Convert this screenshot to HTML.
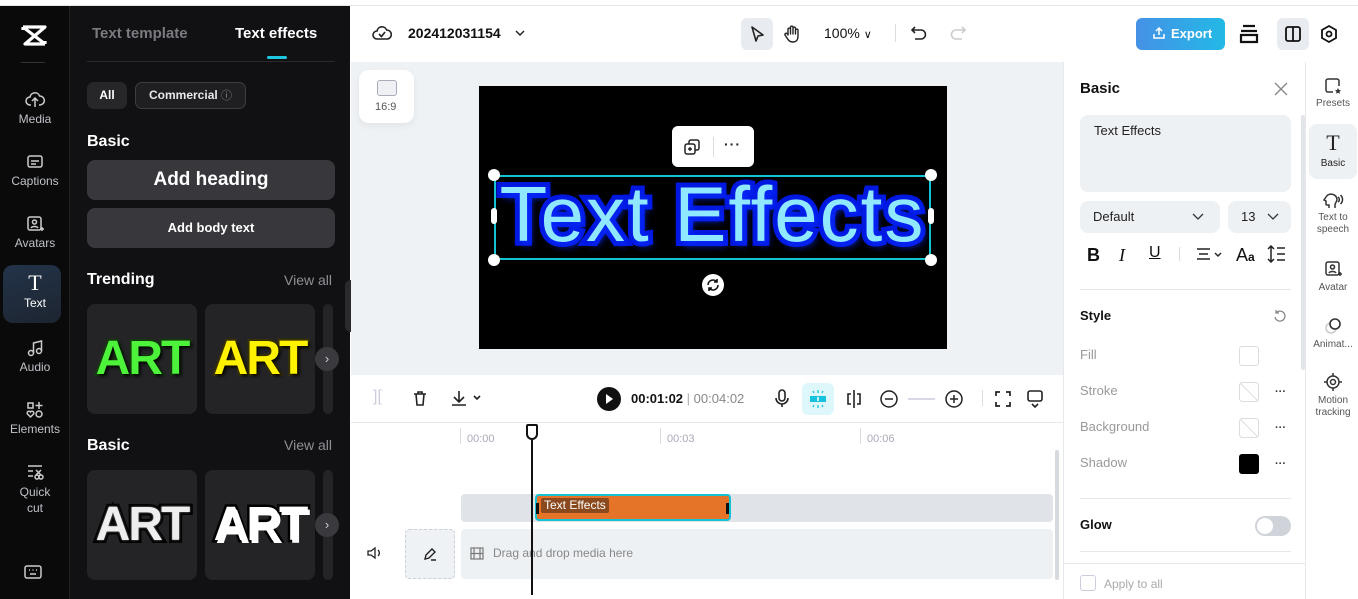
<!DOCTYPE html>
<html><head><meta charset="utf-8"><style>
*{box-sizing:border-box;margin:0;padding:0}
body{width:1358px;height:599px;overflow:hidden;font-family:"Liberation Sans",sans-serif;background:#fff;position:relative}
.a{position:absolute}
.rail{left:0;top:6px;width:70px;height:593px;background:#0a0a0a;border-right:1px solid #222}
.ri{position:absolute;left:0;width:70px;text-align:center;color:#bfc2c8;font-size:12px}
.ri svg{display:block;margin:0 auto 2px}
.panel{left:70px;top:6px;width:280px;height:593px;background:#111113}
.w{color:#fff;font-weight:bold}
.btn{position:absolute;background:#37373c;border-radius:8px;color:#fff;font-weight:bold;text-align:center}
.card{position:absolute;width:110px;height:110px;background:#242427;border-radius:8px;overflow:hidden}
.art{position:absolute;left:0;top:30px;width:110px;text-align:center;font-weight:bold;font-size:48px;line-height:50px;letter-spacing:-2px;paint-order:stroke fill}
.nx{position:absolute;width:24px;height:24px;border-radius:50%;background:#3a3a3e;color:#ccc;font-size:13px;text-align:center;line-height:23px}
.gray{color:#8e9096}
</style></head><body>
<div class="a" style="left:0;top:0;width:1358px;height:6px;background:#fff;border-bottom:1px solid #e3e5e8"></div>
<div class="a rail">
 <svg class="a" style="left:20px;top:18px" width="28" height="24" viewBox="0 0 28 24"><path d="M3 3h22L5 20h20M3 3l22 17M3 3v3M25 20v-3" stroke="#fff" stroke-width="3.2" fill="none" stroke-linejoin="round"/></svg>
 <div class="a" style="left:21px;top:56px;width:24px;height:1px;background:#333"></div>
 <div class="ri" style="top:84px"><svg width="20" height="20" viewBox="0 0 20 20" fill="none" stroke="#ccc" stroke-width="1.5"><path d="M6 15H5a4 4 0 010-8 5 5 0 019.6-1A4 4 0 0115 15h-1M10 17V9M7 11l3-3 3 3"/></svg>Media</div>
 <div class="ri" style="top:146px"><svg width="20" height="20" viewBox="0 0 20 20" fill="none" stroke="#ccc" stroke-width="1.5"><rect x="3" y="4" width="14" height="11" rx="2"/><path d="M6 9h8M6 12h5"/></svg>Captions</div>
 <div class="ri" style="top:208px"><svg width="20" height="20" viewBox="0 0 20 20" fill="none" stroke="#ccc" stroke-width="1.5"><rect x="3" y="3" width="13" height="13" rx="2"/><circle cx="9.5" cy="8" r="2"/><path d="M6 14c1-2 6-2 7 0M15 15h4M17 13v4"/></svg>Avatars</div>
 <div class="a" style="left:3px;top:259px;width:58px;height:58px;border-radius:10px;background:linear-gradient(160deg,#23344a,#1d2430)"></div>
 <div class="ri" style="top:266px;color:#fff"><div style="font:22px 'Liberation Serif',serif;line-height:22px">T</div><div style="margin-top:2px">Text</div></div>
 <div class="ri" style="top:332px"><svg width="20" height="20" viewBox="0 0 20 20" fill="none" stroke="#ccc" stroke-width="1.5"><circle cx="6" cy="15" r="2.5"/><circle cx="14" cy="13" r="2.5"/><path d="M8.5 15V5l8-2v10"/></svg>Audio</div>
 <div class="ri" style="top:394px"><svg width="20" height="20" viewBox="0 0 20 20" fill="none" stroke="#ccc" stroke-width="1.5"><rect x="3" y="3" width="5" height="5"/><path d="M14 2v7M10.5 5.5h7"/><circle cx="14" cy="14" r="3"/><path d="M5.5 17l-3-3a1.8 1.8 0 013-2 1.8 1.8 0 013 2z"/></svg>Elements</div>
 <div class="ri" style="top:456px;line-height:16px"><svg width="20" height="20" viewBox="0 0 20 20" fill="none" stroke="#ccc" stroke-width="1.5"><path d="M3 4h14M3 9h5M3 14h5"/><circle cx="12" cy="15" r="2"/><circle cx="16" cy="15" r="2"/><path d="M11 8l5 5M16 8l-5 5"/></svg>Quick<br>cut</div>
 <svg class="a" style="left:23px;top:558px" width="20" height="16" viewBox="0 0 20 16" fill="none" stroke="#ccc" stroke-width="1.5"><rect x="2" y="2" width="16" height="12" rx="2"/><path d="M6 6h1M9.5 6h1M13 6h1M7 10h6"/></svg>
</div>
<div class="a panel">
 <div class="a" style="left:22px;top:19px;font-size:15px;font-weight:bold;color:#7a7b80">Text template</div>
 <div class="a w" style="left:165px;top:19px;font-size:15px">Text effects</div>
 <div class="a" style="left:197px;top:50px;width:20px;height:3px;background:#1fc6e0;border-radius:2px"></div>
 <div class="a" style="left:17px;top:55px;width:248px;height:1px;background:#2a2a2e"></div>
 <div class="a" style="left:17px;top:76px;width:40px;height:27px;border-radius:7px;background:#27272a;color:#fff;font-size:12px;font-weight:bold;text-align:center;line-height:27px">All</div>
 <div class="a" style="left:65px;top:76px;width:111px;height:27px;border-radius:7px;background:#1f1f22;border:1px solid #3e3e42;color:#e8e8e8;font-size:12px;font-weight:bold;line-height:25px;padding-left:13px">Commercial <span style="color:#888;font-weight:normal;font-size:11px">ⓘ</span></div>
 <div class="a w" style="left:17px;top:127px;font-size:16px">Basic</div>
 <div class="btn" style="left:17px;top:154px;width:248px;height:40px;font-size:19px;line-height:40px">Add heading</div>
 <div class="btn" style="left:17px;top:202px;width:248px;height:40px;font-size:13px;line-height:40px">Add body text</div>
 <div class="a w" style="left:17px;top:265px;font-size:16px">Trending</div>
 <div class="a gray" style="left:214px;top:266px;font-size:14px">View all</div>
 <div class="card" style="left:17px;top:298px"><div class="art" style="color:#4df23a;-webkit-text-stroke:4px #173a10;text-shadow:2px 2px 3px #000">ART</div></div>
 <div class="card" style="left:135px;top:298px"><div class="art" style="color:#fff200;-webkit-text-stroke:4px #3a3300;text-shadow:2px 2px 3px #000">ART</div></div>
 <div class="card" style="left:253px;top:298px;width:10px"></div>
 <div class="nx" style="left:245px;top:341px">›</div>
 <div class="a w" style="left:17px;top:431px;font-size:16px">Basic</div>
 <div class="a gray" style="left:214px;top:431px;font-size:14px">View all</div>
 <div class="card" style="left:17px;top:464px"><div class="art" style="color:#eee;-webkit-text-stroke:6px #000;text-shadow:0 0 2px #888">ART</div></div>
 <div class="card" style="left:135px;top:464px"><div class="art" style="color:#fff;-webkit-text-stroke:5px #000;text-shadow:2px 3px 0 #fff">ART</div></div>
 <div class="card" style="left:253px;top:464px;width:10px"></div>
 <div class="nx" style="left:245px;top:507px">›</div>
</div>
<div class="a" style="left:345px;top:280px;width:12px;height:52px;border-radius:6px;background:#2a2a2c"></div>
<!-- top bar -->
<svg class="a" style="left:372px;top:24px" width="20" height="18" viewBox="0 0 20 18"><path d="M5 15a4 4 0 010-8 5 5 0 019.6-1A4.5 4.5 0 0115 15z M7 10l2.5 2.5L13 8" stroke="#222" fill="none" stroke-width="1.6"/></svg>
<div class="a" style="left:408px;top:25px;font-size:14px;font-weight:bold;color:#111">202412031154</div>
<svg class="a" style="left:514px;top:28px" width="12" height="10"><path d="M2 3l4 4 4-4" stroke="#222" fill="none" stroke-width="1.5"/></svg>
<div class="a" style="left:741px;top:18px;width:32px;height:32px;border-radius:6px;background:#e8ebef"></div>
<svg class="a" style="left:748px;top:25px" width="18" height="18"><path d="M4 2l11 8-5 1-2 5z" stroke="#222" fill="none" stroke-width="1.6" stroke-linejoin="round"/></svg>
<svg class="a" style="left:782px;top:24px" width="20" height="20"><path d="M6 11V5a1.3 1.3 0 012.5 0v5V3a1.3 1.3 0 012.5 0v7V4a1.3 1.3 0 012.5 0v6V6a1.3 1.3 0 012.5 0v6c0 4-2 6-5 6s-4-1-6-4l-2-3a1.3 1.3 0 012-1.5z" stroke="#222" fill="none" stroke-width="1.4" stroke-linejoin="round"/></svg>
<div class="a" style="left:824px;top:25px;font-size:14px;color:#111">100% <span style="font-size:11px">∨</span></div>
<div class="a" style="left:895px;top:24px;width:1px;height:18px;background:#ddd"></div>
<svg class="a" style="left:910px;top:24px" width="18" height="18"><path d="M5 3L2 6l3 3M2 6h9a4.5 4.5 0 010 9H5" stroke="#222" fill="none" stroke-width="1.6"/></svg>
<svg class="a" style="left:949px;top:24px" width="18" height="18"><path d="M13 3l3 3-3 3M16 6H7a4.5 4.5 0 000 9h6" stroke="#ccc" fill="none" stroke-width="1.6"/></svg>
<div class="a" style="left:1136px;top:18px;width:89px;height:32px;border-radius:6px;background:linear-gradient(90deg,#4591e6,#23b9e6);color:#fff;font-size:13px;font-weight:bold;line-height:32px;padding-left:35px">Export</div>
<svg class="a" style="left:1152px;top:26px" width="14" height="14"><path d="M7 9V2M4 5l3-3 3 3M2 8v4h10V8" stroke="#fff" fill="none" stroke-width="1.5"/></svg>
<svg class="a" style="left:1238px;top:22px" width="22" height="24"><path d="M5 4h12M3 9h16M3 13h16v7H3z" stroke="#111" fill="none" stroke-width="2.2"/></svg>
<div class="a" style="left:1277px;top:18px;width:32px;height:32px;border-radius:6px;background:#e8ebef"></div>
<svg class="a" style="left:1284px;top:25px" width="18" height="18"><rect x="2" y="2" width="14" height="14" rx="2" stroke="#111" fill="none" stroke-width="1.8"/><path d="M9 2v14" stroke="#111" stroke-width="1.8"/></svg>
<svg class="a" style="left:1320px;top:24px" width="18" height="20"><path d="M9 2l7 4v8l-7 4-7-4V6z" stroke="#111" fill="none" stroke-width="1.8"/><circle cx="9" cy="10" r="2.5" stroke="#111" fill="none" stroke-width="1.8"/></svg>
<!-- canvas -->
<div class="a" style="left:351px;top:62px;width:712px;height:313px;background:#eff2f5"></div>
<div class="a" style="left:359px;top:70px;width:55px;height:53px;background:#fff;border-radius:10px;box-shadow:0 3px 8px rgba(0,0,0,.06)"></div>
<div class="a" style="left:377px;top:80px;width:20px;height:16px;border:1.5px solid #aab;border-radius:3px;background:#eef0f3"></div>
<div class="a" style="left:375px;top:101px;font-size:11px;color:#555">16:9</div>
<div class="a" style="left:479px;top:86px;width:468px;height:263px;background:#000"></div>
<div class="a" style="left:672px;top:126px;width:82px;height:41px;background:#fff;border-radius:6px"></div>
<svg class="a" style="left:682px;top:137px" width="20" height="20"><rect x="7" y="3" width="10" height="10" rx="2" stroke="#222" fill="none" stroke-width="1.5"/><rect x="3" y="7" width="10" height="10" rx="2" stroke="#222" fill="#fff" stroke-width="1.5"/><path d="M8 10v4M6 12h4" stroke="#222" stroke-width="1.4"/></svg>
<div class="a" style="left:713px;top:137px;width:1px;height:20px;background:#ddd"></div>
<div class="a" style="left:724px;top:136px;font-size:14px;font-weight:bold;color:#222;letter-spacing:1px">···</div>
<div class="a" style="left:494px;top:175px;width:437px;height:85px;border:2px solid #14c3d3"></div>
<div class="a" style="left:464px;top:166px;width:497px;text-align:center;font-size:78px;line-height:96px;color:#8fe8ff;-webkit-text-stroke:10px #0018e0;paint-order:stroke fill;text-shadow:3px 4px 8px #0a2cff;letter-spacing:2px">Text Effects</div>
<div class="a" style="left:488px;top:169px;width:12px;height:12px;border-radius:50%;background:#fff"></div>
<div class="a" style="left:925px;top:169px;width:12px;height:12px;border-radius:50%;background:#fff"></div>
<div class="a" style="left:488px;top:254px;width:12px;height:12px;border-radius:50%;background:#fff"></div>
<div class="a" style="left:925px;top:254px;width:12px;height:12px;border-radius:50%;background:#fff"></div>
<div class="a" style="left:491px;top:208px;width:6px;height:16px;border-radius:3px;background:#fff"></div>
<div class="a" style="left:928px;top:208px;width:6px;height:16px;border-radius:3px;background:#fff"></div>
<div class="a" style="left:702px;top:274px;width:22px;height:22px;border-radius:50%;background:#fff"></div>
<svg class="a" style="left:706px;top:278px" width="14" height="14"><path d="M2 7a5 5 0 019-3M12 7a5 5 0 01-9 3M11 1v3H8M3 13v-3h3" stroke="#111" fill="none" stroke-width="1.6"/></svg>
<!-- timeline toolbar -->
<div class="a" style="left:351px;top:375px;width:712px;height:48px;background:#fff;border-bottom:1px solid #e6e8eb"></div>
<div class="a" style="left:373px;top:388px;font-size:16px;color:#ccd">][</div>
<svg class="a" style="left:411px;top:389px" width="18" height="18"><path d="M3 5h12M7 5V3h4v2M5 5l1 11h6l1-11" stroke="#222" fill="none" stroke-width="1.6"/></svg>
<svg class="a" style="left:450px;top:389px" width="34" height="18"><path d="M9 2v11M4 8l5 5 5-5M2 16h14M24 7l3 3 3-3" stroke="#222" fill="none" stroke-width="1.6"/></svg>
<div class="a" style="left:597px;top:387px;width:24px;height:24px;border-radius:50%;background:#111"></div>
<div class="a" style="left:606px;top:394px;width:0;height:0;border-left:7px solid #fff;border-top:5px solid transparent;border-bottom:5px solid transparent"></div>
<div class="a" style="left:631px;top:391px;font-size:13px;font-weight:bold;color:#111">00:01:02 <span style="font-weight:normal;color:#aaa">|</span> <span style="font-weight:normal;color:#888">00:04:02</span></div>
<svg class="a" style="left:774px;top:389px" width="16" height="20"><rect x="5" y="1" width="6" height="11" rx="3" stroke="#222" fill="none" stroke-width="1.6"/><path d="M2 9a6 6 0 0012 0M8 15v3" stroke="#222" fill="none" stroke-width="1.6"/></svg>
<div class="a" style="left:802px;top:383px;width:32px;height:32px;border-radius:6px;background:#def7fa"></div>
<svg class="a" style="left:806px;top:387px" width="24" height="24"><rect x="4" y="9" width="16" height="6" fill="#17c3dc"/><path d="M12 3v3M12 18v3M7 4l1 2M17 4l-1 2M7 20l1-2M17 20l-1-2" stroke="#17c3dc" stroke-width="1.3"/><path d="M12 10v4" stroke="#fff" stroke-width="1.5"/></svg>
<svg class="a" style="left:844px;top:389px" width="20" height="20"><path d="M10 1v18M7 5H4v10h3M13 5h3v10h-3" stroke="#222" fill="none" stroke-width="1.6"/></svg>
<svg class="a" style="left:879px;top:389px" width="90" height="20"><circle cx="10" cy="10" r="8" stroke="#222" fill="none" stroke-width="1.5"/><path d="M6 10h8" stroke="#222" stroke-width="1.5"/><path d="M29 10h27" stroke="#ccd" stroke-width="1.5"/><circle cx="75" cy="10" r="8" stroke="#222" fill="none" stroke-width="1.5"/><path d="M71 10h8M75 6v8" stroke="#222" stroke-width="1.5"/></svg>
<div class="a" style="left:982px;top:390px;width:1px;height:16px;background:#ddd"></div>
<svg class="a" style="left:994px;top:390px" width="18" height="18"><path d="M2 6V2h4M12 2h4v4M16 12v4h-4M6 16H2v-4" stroke="#222" fill="none" stroke-width="1.7"/></svg>
<svg class="a" style="left:1026px;top:389px" width="18" height="20"><rect x="2" y="2" width="14" height="10" rx="2" stroke="#222" fill="none" stroke-width="1.6"/><path d="M6 15l3 3 3-3" stroke="#222" fill="none" stroke-width="1.6"/></svg>
<!-- timeline -->
<div class="a" style="left:460px;top:428px;width:1px;height:16px;background:#ddd"></div>
<div class="a" style="left:660px;top:428px;width:1px;height:16px;background:#ddd"></div>
<div class="a" style="left:860px;top:428px;width:1px;height:16px;background:#ddd"></div>
<div class="a" style="left:467px;top:433px;font-size:11px;color:#aab">00:00</div>
<div class="a" style="left:667px;top:433px;font-size:11px;color:#aab">00:03</div>
<div class="a" style="left:867px;top:433px;font-size:11px;color:#aab">00:06</div>
<div class="a" style="left:461px;top:494px;width:592px;height:28px;background:#e0e3e7;border-radius:4px"></div>
<div class="a" style="left:535px;top:494px;width:196px;height:27px;background:#e57328;border:2px solid #14c3d3;border-radius:4px"></div>
<div class="a" style="left:541px;top:498px;padding:0 3px;height:15px;background:#8a4a1d;color:#fff;font-size:12px;line-height:15px;border-radius:2px">Text Effects</div>
<div class="a" style="left:536px;top:503px;width:3px;height:11px;background:#111"></div>
<div class="a" style="left:726px;top:503px;width:3px;height:11px;background:#111"></div>
<div class="a" style="left:405px;top:529px;width:50px;height:50px;border:1px dashed #ccd;border-radius:4px;background:#eff2f5"></div>
<svg class="a" style="left:422px;top:546px" width="16" height="16"><path d="M3 13l1-4 6-6 3 3-6 6zM9 14h5" stroke="#222" fill="none" stroke-width="1.4"/></svg>
<svg class="a" style="left:366px;top:545px" width="18" height="16"><path d="M2 6h3l4-3v10l-4-3H2zM12 5a4 4 0 010 6" stroke="#222" fill="none" stroke-width="1.3"/></svg>
<div class="a" style="left:461px;top:529px;width:592px;height:50px;background:#eef1f4;border-radius:4px"></div>
<svg class="a" style="left:470px;top:547px" width="14" height="13"><rect x="1" y="1" width="12" height="11" stroke="#777" fill="none" stroke-width="1.2"/><path d="M4 1v11M10 1v11M1 6.5h12" stroke="#777" stroke-width="1.2"/></svg>
<div class="a" style="left:493px;top:546px;font-size:12px;color:#888">Drag and drop media here</div>
<div class="a" style="left:1055px;top:450px;width:4px;height:130px;background:#d6d9dd;border-radius:2px"></div>
<div class="a" style="left:531px;top:440px;width:2px;height:155px;background:#111"></div>
<div class="a" style="left:526px;top:424px;width:12px;height:16px;border:2px solid #111;border-radius:2px 2px 6px 6px;background:#fff"></div>
<!-- right panel -->
<div class="a" style="left:1063px;top:62px;width:1px;height:537px;background:#e6e8eb"></div>
<div class="a" style="left:1080px;top:80px;font-size:15px;font-weight:bold;color:#111">Basic</div>
<svg class="a" style="left:1274px;top:82px" width="14" height="14"><path d="M1 1l12 12M13 1L1 13" stroke="#888" stroke-width="1.4"/></svg>
<div class="a" style="left:1080px;top:115px;width:211px;height:77px;background:#eef1f4;border-radius:8px;padding:8px 14px;font-size:13px;color:#222">Text Effects</div>
<div class="a" style="left:1080px;top:201px;width:140px;height:32px;background:#eef1f4;border-radius:8px;padding:0 13px;font-size:13px;line-height:32px;color:#222">Default<svg style="position:absolute;right:16px;top:12px" width="12" height="8"><path d="M1 1l5 5 5-5" stroke="#333" fill="none" stroke-width="1.3"/></svg></div>
<div class="a" style="left:1228px;top:201px;width:63px;height:32px;background:#eef1f4;border-radius:8px;padding:0 13px;font-size:13px;line-height:32px;color:#222">13<svg style="position:absolute;right:12px;top:12px" width="12" height="8"><path d="M1 1l5 5 5-5" stroke="#333" fill="none" stroke-width="1.3"/></svg></div>
<div class="a" style="left:1087px;top:245px;font-size:18px;font-weight:bold;color:#111">B</div>
<div class="a" style="left:1119px;top:245px;font:italic 18px 'Liberation Serif',serif;color:#111">I</div>
<div class="a" style="left:1149px;top:244px;font-size:16px;color:#111;text-decoration:underline">U</div>
<div class="a" style="left:1179px;top:247px;width:1px;height:14px;background:#ddd"></div>
<svg class="a" style="left:1196px;top:247px" width="28" height="14"><path d="M1 2h13M3 7h9M1 12h13M19 6l3 3 3-3" stroke="#222" fill="none" stroke-width="1.4"/></svg>
<div class="a" style="left:1236px;top:245px;font-size:18px;color:#111">A<span style="font-size:12px;font-weight:bold">a</span></div>
<svg class="a" style="left:1267px;top:245px" width="20" height="18"><path d="M4 1v16M1 4l3-3 3 3M1 14l3 3 3-3M10 3h8M10 9h8M10 15h8" stroke="#222" fill="none" stroke-width="1.5"/></svg>
<div class="a" style="left:1080px;top:289px;width:211px;height:1px;background:#e6e8eb"></div>
<div class="a" style="left:1080px;top:308px;font-size:13px;font-weight:bold;color:#111">Style</div>
<svg class="a" style="left:1273px;top:309px" width="14" height="14"><path d="M3 4a5 5 0 11-1 4M3 1v3h3" stroke="#888" fill="none" stroke-width="1.3"/></svg>
<div class="a" style="left:1080px;top:347px;font-size:13px;color:#999">Fill</div>
<div class="a" style="left:1080px;top:383px;font-size:13px;color:#999">Stroke</div>
<div class="a" style="left:1080px;top:419px;font-size:13px;color:#999">Background</div>
<div class="a" style="left:1080px;top:455px;font-size:13px;color:#999">Shadow</div>
<div class="a" style="left:1239px;top:346px;width:20px;height:20px;border:1px solid #ddd;border-radius:3px"></div>
<svg class="a" style="left:1239px;top:382px" width="20" height="20"><rect x=".5" y=".5" width="19" height="19" rx="3" stroke="#ddd" fill="none"/><path d="M1 1l18 18" stroke="#ddd"/></svg>
<svg class="a" style="left:1239px;top:418px" width="20" height="20"><rect x=".5" y=".5" width="19" height="19" rx="3" stroke="#ddd" fill="none"/><path d="M1 1l18 18" stroke="#ddd"/></svg>
<div class="a" style="left:1239px;top:454px;width:20px;height:20px;background:#000;border-radius:3px"></div>
<div class="a" style="left:1275px;top:386px;font-size:11px;color:#333;font-weight:bold">···</div>
<div class="a" style="left:1275px;top:422px;font-size:11px;color:#333;font-weight:bold">···</div>
<div class="a" style="left:1275px;top:458px;font-size:11px;color:#333;font-weight:bold">···</div>
<div class="a" style="left:1080px;top:498px;width:211px;height:1px;background:#e6e8eb"></div>
<div class="a" style="left:1080px;top:517px;font-size:13px;font-weight:bold;color:#111">Glow</div>
<div class="a" style="left:1255px;top:516px;width:36px;height:20px;border-radius:10px;background:#d0d4da"></div>
<div class="a" style="left:1257px;top:518px;width:16px;height:16px;border-radius:50%;background:#fff"></div>
<div class="a" style="left:1080px;top:551px;width:211px;height:1px;background:#e6e8eb"></div>
<div class="a" style="left:1063px;top:563px;width:242px;height:1px;background:#e6e8eb"></div>
<div class="a" style="left:1080px;top:575px;width:16px;height:16px;border:1px solid #ccd;border-radius:3px"></div>
<div class="a" style="left:1104px;top:577px;font-size:12px;color:#aaa">Apply to all</div>
<div class="a" style="left:1301px;top:115px;width:4px;height:255px;background:#e2e5e9;border-radius:2px"></div>
<!-- right rail -->
<div class="a" style="left:1305px;top:62px;width:1px;height:537px;background:#e6e8eb"></div>
<div class="a" style="left:1309px;top:124px;width:48px;height:55px;border-radius:8px;background:#eef1f4"></div>
<div class="ri" style="left:1298px;top:76px;color:#555;font-size:10px;line-height:12px"><svg width="20" height="20" viewBox="0 0 20 20" fill="none" stroke="#333" stroke-width="1.5"><path d="M10 16H5a2 2 0 01-2-2V5a2 2 0 012-2h9a2 2 0 012 2v5"/><path d="M15 12l1 2 2 .3-1.5 1.4.4 2-1.9-1-1.9 1 .4-2L12 14.3l2-.3z" fill="#333" stroke="none"/></svg>Presets</div>
<div class="ri" style="left:1298px;top:132px;color:#222;font-size:10px;line-height:12px"><div style="font:22px 'Liberation Serif',serif;line-height:22px;margin-bottom:4px">T</div>Basic</div>
<div class="ri" style="left:1298px;top:190px;color:#555;font-size:10px;line-height:12px"><svg width="22" height="20" viewBox="0 0 22 20" fill="none" stroke="#333" stroke-width="1.5"><path d="M7 18v-3H5a1 1 0 01-1-1v-3l-2-1 2-3a6 6 0 0111 2c0 3-2 4-2 6v3"/><path d="M16 7a3 3 0 010 5M18.5 5a6 6 0 010 9"/></svg>Text to<br>speech</div>
<div class="ri" style="left:1298px;top:258px;color:#555;font-size:10px;line-height:12px"><svg width="20" height="22" viewBox="0 0 20 20" fill="none" stroke="#333" stroke-width="1.5"><rect x="3" y="3" width="13" height="13" rx="2"/><circle cx="9.5" cy="8" r="2"/><path d="M6 14c1-2 6-2 7 0M15 15h4M17 13v4"/></svg>Avatar</div>
<div class="ri" style="left:1298px;top:315px;color:#555;font-size:10px;line-height:12px"><svg width="20" height="22" viewBox="0 0 20 20" fill="none" stroke-width="1.6"><circle cx="8" cy="12" r="5" stroke="#ccc"/><circle cx="12" cy="8" r="5" stroke="#333" fill="#fff"/></svg>Animat...</div>
<div class="ri" style="left:1298px;top:371px;color:#555;font-size:10px;line-height:12px"><svg width="20" height="22" viewBox="0 0 20 20" fill="none" stroke="#333" stroke-width="1.5"><circle cx="10" cy="10" r="6"/><circle cx="10" cy="10" r="2.5"/><path d="M10 1v3M10 16v3M1 10h3M16 10h3"/></svg>Motion<br>tracking</div>
</body></html>
